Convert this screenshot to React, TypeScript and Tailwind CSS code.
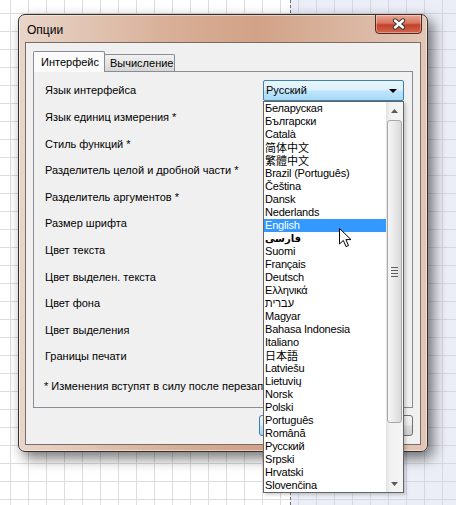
import React from "react";

type Lang = { name: string; cls?: string };

const cjk = "text-[11px] tracking-normal";

const languages: Lang[] = [
  { name: "Беларуская" },
  { name: "Български" },
  { name: "Català" },
  { name: "简体中文", cls: "font-['Noto_Sans_CJK_SC',sans-serif] " + cjk },
  { name: "繁體中文", cls: "font-['Noto_Sans_CJK_TC',sans-serif] " + cjk },
  { name: "Brazil (Português)" },
  { name: "Čeština" },
  { name: "Dansk" },
  { name: "Nederlands" },
  { name: "English" },
  { name: "فارسی", cls: "font-['DejaVu_Sans',sans-serif] font-bold text-[10px] tracking-normal" },
  { name: "Suomi" },
  { name: "Français" },
  { name: "Deutsch" },
  { name: "Ελληνικά" },
  { name: "עברית", cls: "tracking-normal" },
  { name: "Magyar" },
  { name: "Bahasa Indonesia" },
  { name: "Italiano" },
  { name: "日本語", cls: "font-['Noto_Sans_CJK_JP',sans-serif] " + cjk },
  { name: "Latviešu" },
  { name: "Lietuvių" },
  { name: "Norsk" },
  { name: "Polski" },
  { name: "Português" },
  { name: "Română" },
  { name: "Русский" },
  { name: "Srpski" },
  { name: "Hrvatski" },
  { name: "Slovenčina" },
];

const labels = [
  "Язык единиц измерения *",
  "Стиль функций *",
  "Разделитель целой и дробной части *",
  "Разделитель аргументов *",
  "Размер шрифта",
  "Цвет текста",
  "Цвет выделен. текста",
  "Цвет фона",
  "Цвет выделения",
  "Границы печати",
];

function CloseButton() {
  return (
    <div className="absolute right-[5px] top-[-1px] w-[47px] h-[20px] rounded-b-[4px] border border-[#4e2a24] bg-[linear-gradient(to_bottom,#e9a894,#d87560_45%,#c4402a_55%,#d3674c)] shadow-[inset_0_0_0_1px_rgba(255,255,255,0.35)] flex items-center justify-center">
      <svg width="14" height="12" viewBox="0 0 14 12">
        <path d="M3 2.5 L11 9.5 M11 2.5 L3 9.5" stroke="#3a3a3a" strokeWidth="4.4" strokeLinecap="round" />
        <path d="M3 2.5 L11 9.5 M11 2.5 L3 9.5" stroke="#ffffff" strokeWidth="2.4" strokeLinecap="round" />
      </svg>
    </div>
  );
}

function LanguageList() {
  return (
    <div className="absolute left-0 top-full z-20 w-[141px] h-[392px] flex border border-[#646464] bg-white shadow-[2px_2px_3px_rgba(0,0,0,0.18)]">
      <div className="flex-1 flex flex-col overflow-hidden tracking-[-0.2px]">
        {languages.map((l) => (
          <div
            key={l.name}
            className={
              "h-[13px] leading-[13px] pl-[1px] whitespace-nowrap " +
              (l.name === "English" ? "bg-[#3399ff] text-white " : "text-black ") +
              (l.cls ?? "")
            }
          >
            {l.name}
          </div>
        ))}
      </div>

      {/* vertical scrollbar */}
      <div className="w-[17px] flex flex-col bg-[linear-gradient(to_right,#e2e2e2,#f2f2f2_25%,#f4f4f4)]">
        <div className="h-[17px] flex items-center justify-center">
          <svg width="7" height="4" viewBox="0 0 7 4">
            <path d="M0 4 L3.5 0 L7 4 Z" fill="#5a5a5a" />
          </svg>
        </div>
        <div className="flex-1 px-[1px] pt-[1px]">
          <div className="h-[303px] rounded-[3px] border border-[#a9a9a9] bg-[linear-gradient(to_right,#f6f6f6,#e9e9e9_50%,#d9d9d9)] flex flex-col items-center justify-center gap-[2px]">
            <div className="w-[7px] h-px bg-[#5f5f5f]" />
            <div className="w-[7px] h-px bg-[#5f5f5f]" />
            <div className="w-[7px] h-px bg-[#5f5f5f]" />
            <div className="w-[7px] h-px bg-[#5f5f5f]" />
          </div>
        </div>
        <div className="h-[17px] flex items-center justify-center">
          <svg width="7" height="4" viewBox="0 0 7 4">
            <path d="M0 0 L7 0 L3.5 4 Z" fill="#5a5a5a" />
          </svg>
        </div>
      </div>
    </div>
  );
}

function LanguageCombo() {
  return (
    <div className="relative ml-auto w-[141px] h-[21px]">
      <div className="h-full flex items-center rounded-[2px] border border-[#3c7fb1] bg-[linear-gradient(to_bottom,#eaf6fd,#d9f0fc_48%,#bee6fd_52%,#a7d9f5)] pl-[2px] pr-[6px]">
        <span className="flex-1">Русский</span>
        <svg width="8" height="4" viewBox="0 0 8 4">
          <path d="M0 0 L8 0 L4 4 Z" fill="#000" />
        </svg>
      </div>
      <LanguageList />
    </div>
  );
}

function OptionsWindow() {
  return (
    <div className="absolute left-[18px] top-[14px] w-[410px] h-[438px] flex flex-col rounded-[7px] border border-[#38302c] bg-[linear-gradient(to_right,#e8d5c9,#d8ae96_38%,#d1a287_58%,#e2c6b6)] shadow-[5px_6px_14px_rgba(0,0,0,0.55),inset_0_0_0_1px_rgba(255,255,255,0.45)]">
      {/* title bar */}
      <div className="relative h-[27px] flex items-center pl-[8px] pt-[2px] text-[12px] text-black">
        Опции
        <CloseButton />
      </div>

      <div className="mx-[6px] mb-[6px] flex-1 flex flex-col border border-[#786c66] bg-[#f0f0f0] px-[7px] pt-[8px]">
        {/* tabs */}
        <div className="h-[20px] flex items-end">
          <div className="relative z-10 -mb-px h-[21px] w-[72px] flex items-center pl-[7px] rounded-t-[2px] border border-b-0 border-[#898c95] bg-[#fbfbfb]">
            Интерфейс
          </div>
          <div className="-ml-px h-[17px] w-[71px] flex items-center pl-[5px] rounded-t-[2px] border border-b-0 border-[#898c95] bg-[linear-gradient(to_bottom,#f2f2f2,#e4e4e4_50%,#d6d6d6)]">
            Вычисление
          </div>
        </div>

        {/* tab page */}
        <div className="h-[337px] flex flex-col border border-[#898c95] bg-[#f0f0f0] pl-[11px] pr-[8px] pt-[5px]">
          <div className="h-[27px] flex items-center">
            <span>Язык интерфейса</span>
            <LanguageCombo />
          </div>
          {labels.map((t) => (
            <div key={t} className="h-[26.6px] flex items-center">
              {t}
            </div>
          ))}
          <div className="mt-[3px] h-[27px] flex items-center -ml-px whitespace-nowrap">
            * Изменения вступят в силу после перезапуска
          </div>
        </div>

        {/* dialog buttons, mostly under the open list */}
        <div className="mt-[7px] flex justify-end gap-[4px]">
          <div className="w-[75px] h-[21px] rounded-[3px] border border-[#3c7fb1] bg-[linear-gradient(to_bottom,#eaf6fd,#d9f0fc_48%,#bee6fd_52%,#a7d9f5)]" />
          <div className="w-[75px] h-[21px] rounded-[3px] border border-[#707070] bg-[linear-gradient(to_bottom,#f2f2f2,#ebebeb_48%,#dddddd_52%,#cfcfcf)]" />
        </div>
      </div>
    </div>
  );
}

export default function App() {
  return (
    <div className="relative w-[456px] h-[505px] overflow-hidden bg-white bg-[linear-gradient(to_right,#dddddd_1px,transparent_1px),linear-gradient(to_bottom,#dddddd_1px,transparent_1px)] bg-[size:18px_18px] bg-[position:10px_13px] font-['Liberation_Sans','DejaVu_Sans',Arial,sans-serif] text-[11px] text-black">
      {/* desktop: plain sheet on the left, tinted area past the dashed divider */}
      <div className="flex h-full">
        <div className="w-[290px]" />
        <div className="flex-1 border-l border-dashed border-[#6e6e6e] bg-[#c5cfe6]/35" />
      </div>

      <OptionsWindow />

      {/* mouse pointer */}
      <svg className="absolute left-[339px] top-[228px] z-30" width="13" height="20" viewBox="0 0 13 20">
        <path d="M0.5 0.5 V16 L4.3 12.4 L7 18.6 L9.5 17.5 L6.9 11.6 H12 Z" fill="#fff" stroke="#000" strokeWidth="1" strokeLinejoin="round" />
      </svg>
    </div>
  );
}
